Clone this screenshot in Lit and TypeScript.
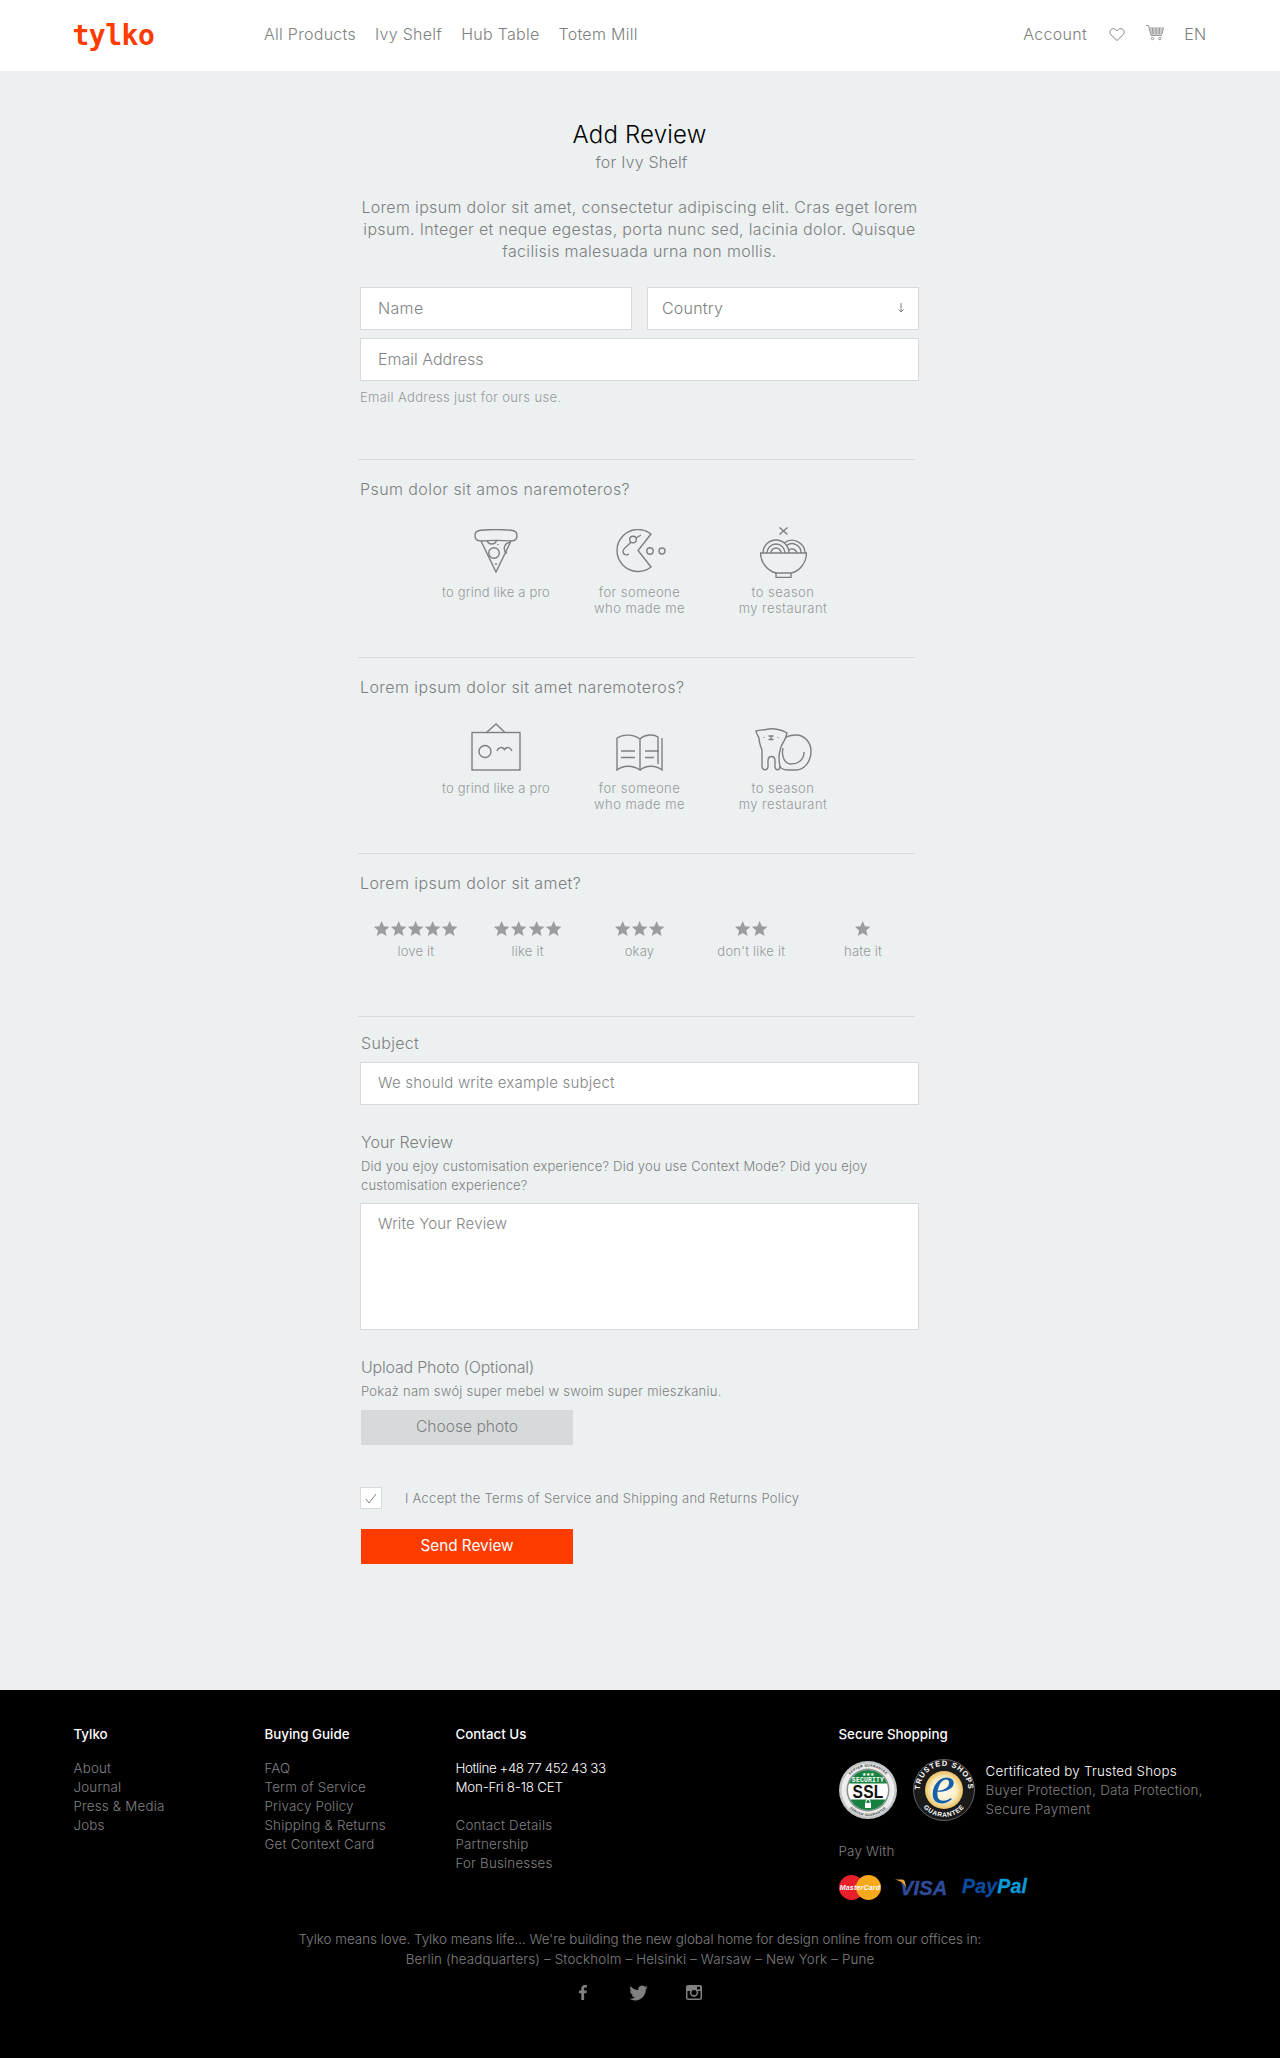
import { LitElement, html, css, svg } from "lit";
import { customElement } from "lit/decorators.js";

const pizza = svg`<svg class="ic mb7" width="44" height="44" viewBox="0 0 44 44"><path d="M7 12C3 12 1 10 1 6.500 1 3 3 1.500 7 1.200 16 .4 28 .4 37 1.200 41 1.500 43 3 43 6.500 43 10 41 12 37 12 27 11.200 17 11.200 7 12Z"/><path d="M7 12 22 43 37 12"/><path d="M13 11.500a5 5 0 0 0 9.500 0"/><circle cx="20" cy="24" r="5.300"/><path d="M36 13.500a6 6 0 0 0-3 11"/><path d="M24 15v1M22 34v2"/></svg>`;
const pacman = svg`<svg class="ic mb7" width="52" height="44" viewBox="0 0 52 44"><path d="M37 5A21 21 0 1 0 37 38L24 21.500Z"/><circle cx="36" cy="22" r="3.200"/><circle cx="48" cy="22" r="3"/><circle cx="19" cy="10.500" r="3.300"/><path d="M22 9l5-3M17 13c-3 4-8 6-8 9.500 0 3.500 4 4 6 2.500"/></svg>`;
const bowl = svg`<svg class="ic mb2" width="47" height="52" viewBox="0 0 47 52"><path d="M19.500 1.500l8 7M27.500 1.500l-8 7"/><path d="M.5 27h46c0 10-7 18-15 20H16C8 45 .5 37 .5 27Z"/><path d="M16 47v4.500h15V47"/><path d="M3 27a13 13 0 0 1 26 0M7 27a9 9 0 0 1 18 0M11 27a5 5 0 0 1 10 0"/><path d="M24 17a13 13 0 0 1 21 10M26 20a9 9 0 0 1 15 7M29 24a5 5 0 0 1 8 3"/></svg>`;
const frame = svg`<svg class="ic mb9" width="50" height="48" viewBox="0 0 50 48"><rect x="1" y="9.500" width="48" height="37.500"/><path d="M15.500 9.500 25 1l9 8.500"/><circle cx="14" cy="28.500" r="6"/><path d="M26 28c1-4 5.500-4.500 7.500-1.500 2-3 6-2.500 7.500 1.500"/></svg>`;
const book = svg`<svg class="ic mb9" width="47" height="38" viewBox="0 0 47 38"><path d="M1 37V5c6-4 16-4 23 1v31C17 32 7 32 1 37Z"/><path d="M24 6c5-5 14-5 18-2v27"/><path d="M24 37c6-5 16-5 22 0V5"/><path d="M5 18h14M5 24.500h14M29 18h14M29 24.500h9"/></svg>`;
const cat = svg`<svg class="ic mb9" width="57" height="43" viewBox="0 0 57 43"><path d="M7 22C5 17 4 13 4 10 3 8 1 5 1 3c4-1 7-1 10-1.500 4-1 8-1 12 0 3 .5 6 1.500 9 3.500-1 3-1 5-3 8-5 7-6 17-4 25"/><path d="M7 22v16c0 5 6 5 6 0v-5c0-6 7-6 7 0v5c0 5 5 5 5 0"/><path d="M30 10c3-2 7-3 11-3 9 0 15 8 15 16 0 11-7 19-15 19h-8c-5 0-8-2-8-4"/><path d="M28 20c-2 9 2 16 8 16 7 0 13-4 13-12"/><path d="M9 9v.8M23 9v.8M13.500 8h5M16 8v3.500M13.500 11.500h5"/></svg>`;
const heart = svg`<svg width="16" height="13" viewBox="0 0 16 13" fill="none" stroke="#808080" stroke-width="1"><path d="M8 12.500 1.700 6.500C-.5 3.500 2 .5 4.500.7 6 .8 7.300 1.700 8 3c.7-1.300 2-2.200 3.500-2.300C14 .5 16.500 3.500 14.300 6.500Z"/></svg>`;
const cart = svg`<svg width="18" height="16" viewBox="0 0 18 16" fill="none" stroke="#808080" stroke-width=".8"><path d="M0 .5h2.500L5 10.500h11"/><path d="M3 3h14.500l-1.500 6H5M6.500 3l.7 6M10 3l.2 6M13.500 3l-.5 6M3.500 5h13.500M4 7h12.800"/><circle cx="6.500" cy="13.500" r="1.200"/><circle cx="14" cy="13.500" r="1.200"/></svg>`;
const fb = svg`<svg width="8" height="15" viewBox="0 0 8 15" fill="#808080"><path d="M2.300 15V8.300H0V5.600h2.300V3.700C2.300 1.300 3.700 0 5.800 0c1 0 1.800.1 2.100.1v2.500H6.500c-1.200 0-1.400.5-1.400 1.300v1.700h2.700l-.4 2.700H5.100V15Z"/></svg>`;
const tw = svg`<svg width="19" height="16" viewBox="0 1.500 24 21" fill="#808080"><path d="M23.950 4.570a10 10 0 0 1-2.820.77 4.960 4.960 0 0 0 2.160-2.720c-.95.55-2 .96-3.120 1.190a4.920 4.920 0 0 0-8.380 4.480C7.690 8.100 4.070 6.130 1.640 3.160a4.820 4.820 0 0 0-.67 2.480c0 1.710.87 3.210 2.190 4.100a4.900 4.900 0 0 1-2.230-.62v.06a4.920 4.920 0 0 0 3.950 4.830 5 5 0 0 1-2.210.08 4.940 4.940 0 0 0 4.600 3.420A9.870 9.870 0 0 1 0 19.540a14 14 0 0 0 7.560 2.210c9.050 0 14-7.500 14-13.980 0-.21 0-.42-.02-.63a9.940 9.940 0 0 0 2.470-2.550z"/></svg>`;
const ig = svg`<svg width="16" height="15" viewBox="0 0 16 15"><rect width="16" height="15" rx="2" fill="#808080"/><rect x="1.500" y="6" width="13" height="7.500" fill="#000"/><circle cx="8" cy="7.500" r="4.200" fill="#808080"/><circle cx="8" cy="7.500" r="2.600" fill="#000"/><rect x="11" y="1.800" width="3" height="2.600" fill="#000"/></svg>`;
const ssl = svg`<svg width="58" height="58" viewBox="0 0 58 58">
<defs><path id="sslt" d="M5.500 29a23.500 23.500 0 0 1 47 0"/><path id="sslb" d="M3 29a26 26 0 0 0 52 0"/><clipPath id="sslc"><circle cx="29" cy="29" r="20"/></clipPath></defs>
<circle cx="29" cy="29" r="29" fill="#c4c6c8"/><circle cx="29" cy="29" r="26.500" fill="#eceded"/><circle cx="29" cy="29" r="21.500" fill="#8b8e91"/>
<text font-size="3.500" font-weight="700" fill="#333" font-family="Liberation Sans,sans-serif"><textPath href="#sslt" startOffset="50%" text-anchor="middle">SERVER GUARANTEE</textPath></text>
<text font-size="3.500" font-weight="700" fill="#333" font-family="Liberation Sans,sans-serif"><textPath href="#sslb" startOffset="50%" text-anchor="middle">SERVER GUARANTEE</textPath></text>
<g clip-path="url(#sslc)"><rect y="9" width="58" height="40" fill="#fff"/><rect y="9" width="58" height="13.500" fill="#17823f"/><rect y="38.500" width="58" height="11" fill="#17823f"/></g>
<text x="29" y="15" text-anchor="middle" font-size="5" fill="#fff" font-family="DejaVu Sans,sans-serif">★★★</text>
<text x="29" y="21" text-anchor="middle" font-size="6.400" font-weight="700" fill="#fff" font-family="Liberation Mono,monospace">SECURITY</text>
<text transform="translate(29 37) scale(.82 1)" text-anchor="middle" font-size="19" font-weight="700" fill="#111" font-family="Liberation Sans,sans-serif">SSL</text>
<rect x="26" y="42" width="6" height="5" fill="#fff"/><path d="M27 42v-1.500a2 2 0 0 1 4 0V42" fill="none" stroke="#fff"/>
</svg>`;
const trusted = svg`<svg width="62" height="62" viewBox="0 0 62 62">
<defs><path id="tst" d="M7.300 36A24.200 24.200 0 1 1 54.700 36"/><path id="tsb" d="M7 43A26.800 26.800 0 0 0 55 43"/><radialGradient id="tsg"><stop offset="0" stop-color="#fffdf4"/><stop offset=".65" stop-color="#fbeec4"/><stop offset="1" stop-color="#e9bf62"/></radialGradient></defs>
<circle cx="31" cy="31" r="30.500" fill="#1a1a1a" stroke="#777" stroke-width=".8"/><circle cx="31" cy="31" r="19" fill="url(#tsg)"/>
<text font-size="7.500" font-weight="700" fill="#fff" font-family="Liberation Sans,sans-serif" letter-spacing=".9"><textPath href="#tst" startOffset="50%" text-anchor="middle">TRUSTED SHOPS</textPath></text>
<text font-size="6.500" font-weight="700" fill="#fff" font-family="Liberation Sans,sans-serif" letter-spacing=".6"><textPath href="#tsb" startOffset="50%" text-anchor="middle">GUARANTEE</textPath></text>
<text x="30" y="44" text-anchor="middle" font-size="54" font-style="italic" font-family="Liberation Serif,serif" fill="#1560ab">e</text>
</svg>`;
const mc = svg`<svg width="42" height="25" viewBox="0 0 42 25"><circle cx="12.500" cy="12.500" r="12.500" fill="#e8202a"/><circle cx="29.500" cy="12.500" r="12.500" fill="#f8a81c"/><text x="21" y="15" text-anchor="middle" font-size="7" font-weight="700" font-style="italic" fill="#fff" font-family="Liberation Sans,sans-serif">MasterCard</text></svg>`;
const visa = svg`<svg width="53" height="20" viewBox="0 0 53 20"><text x="5" y="17" font-size="20" font-weight="700" font-style="italic" fill="#2f4b99" stroke="#2f4b99" stroke-width=".4" font-family="Liberation Sans,sans-serif">VISA</text><path d="M0 1.500h7c2 0 2.500 1 3 3l1.500 6.500C10 6 6 3 0 1.500Z" fill="#e9a134"/></svg>`;
const paypal = svg`<svg width="65" height="21" viewBox="0 0 65 21"><text y="16" font-size="19.500" font-weight="700" font-style="italic" font-family="Liberation Sans,sans-serif" stroke-width=".3"><tspan fill="#0b4c9e" stroke="#0b4c9e">Pay</tspan><tspan fill="#0a9bdc" stroke="#0a9bdc">Pal</tspan></text></svg>`;

const ratings: [number, string][] = [[5, "love it"], [4, "like it"], [3, "okay"], [2, "don't like it"], [1, "hate it"]];

@customElement("app-root")
export class AppRoot extends LitElement {
  static styles = css`
    :host { display: block; font-family: Inter, "Noto Sans", sans-serif; font-weight: 300; color: #7d7f80; letter-spacing: .33px; }
    * { box-sizing: border-box; }
    header { height: 71px; background: #fff; display: flex; align-items: center; padding: 0 73.5px 3px; font-size: 16px; }
    .logo { width: 190.5px; margin-left: -1px; margin-right: 1px; font-family: "DejaVu Sans Mono", monospace; font-weight: 700; font-size: 28px; letter-spacing: -.5px; color: #ff3c00; line-height: 30px; margin-top: 3px; }
    nav { display: flex; gap: 19px; flex: 1; letter-spacing: .28px; }
    .right { display: flex; align-items: center; }
    .right svg { display: block; }
    .right .h { margin: 0 21.500px 0 21.500px; }
    .right .c { margin: -2px 20px 0 0; }
    main { background: #ecf0f1; padding: 49px 0 126px; }
    .wrap { width: 559px; margin: 0 auto 0 360px; }
    h1 { margin: 0; font-size: 24px; line-height: 30px; font-weight: 300; color: #000; text-align: center; letter-spacing: .2px; }
    .sub { font-size: 16px; line-height: 22px; text-align: center; margin-top: 1px; padding-left: 4px; letter-spacing: .2px; }
    .intro { font-size: 16px; line-height: 22px; text-align: center; margin: 23px 0 25px; }
    .row { display: grid; grid-template-columns: 272px 272px; gap: 15px; margin-bottom: 8px; }
    input, textarea, .select { display: block; width: 100%; height: 43px; background: #fff; border: 1px solid #d6dadc; border-radius: 0; font: inherit; font-size: 16px; letter-spacing: .33px; color: #7d7f80; padding: 0 17px 2px; outline: none; }
    input.mail { letter-spacing: 0; }
    input.sm { font-size: 15px; letter-spacing: .22px; padding-bottom: 3px; }
    textarea { height: 127px; padding-top: 9px; resize: none; line-height: 22px; font-size: 15px; letter-spacing: .15px; }
    ::placeholder { color: #828586; opacity: 1; }
    .select { display: flex; align-items: center; justify-content: space-between; padding: 0 13px 2px 14px; letter-spacing: .2px; }
    .select svg { display: block; }
    .help { font-size: 13px; line-height: 16px; color: #96999a; margin-top: 8px; letter-spacing: .34px; }
    hr { border: 0; height: 1px; background: #d6dadc; width: 557px; margin: 0 0 0 -2px; }
    .sec1 { margin-top: 54px; }
    .q { font-size: 16px; line-height: 22px; margin: 0; letter-spacing: .42px; }
    .q.top { margin-top: 18px; }
    .icons { display: flex; justify-content: center; }
    .cell { width: 143.500px; text-align: center; font-size: 13px; line-height: 16px; color: #96999a; letter-spacing: .45px; }
    .cell:first-child { letter-spacing: .18px; }
    .box { display: flex; justify-content: center; align-items: flex-end; }
    .i1 { margin-top: 22px; margin-bottom: 41px; }
    .i1 .box { height: 62px; }
    .i2 { margin-top: 19px; margin-bottom: 41px; }
    .i2 .box { height: 63px; }
    .ic { display: block; fill: none; stroke: #7d7f80; stroke-width: 1.400; }
    .mb7 { margin-bottom: 11px; }
    .mb2 { margin-bottom: 6px; }
    .mb9 { margin-bottom: 9px; }
    .rates { display: grid; grid-template-columns: repeat(5, 1fr); margin: 24px 0 57px; text-align: center; }
    .stars { display: flex; justify-content: center; height: 20px; align-items: center; }
    .stars svg { display: block; margin: 0 -.1px; }
    .rlabel { font-size: 13px; line-height: 16px; color: #96999a; margin-top: 5px; letter-spacing: .2px; }
    .lab { font-size: 16px; line-height: 22px; margin: 0; padding-left: 1px; }
    .lab.s { margin-top: 15px; margin-bottom: 8px; }
    .lab.t { margin-top: 26px; letter-spacing: 0; }
    .lab.up { letter-spacing: -.22px; }
    .small { font-size: 13px; line-height: 19px; margin: 4px 0 8px; padding-left: 1px; letter-spacing: .22px; }
    .small.u { margin-bottom: 9px; letter-spacing: .25px; }
    .btn { width: 212px; height: 35px; margin-left: 1px; padding-bottom: 2px; display: flex; align-items: center; justify-content: center; font-size: 15.600px; letter-spacing: 0; }
    .grey { background: #d7dadb; color: #7d7f80; }
    .orange { background: #ff3c00; color: #fff; margin-top: 20px; font-weight: 400; font-size: 15.300px; }
    .check { display: flex; align-items: center; margin-top: 42px; font-size: 13px; line-height: 19px; letter-spacing: .27px; }
    .cb { width: 22px; height: 22px; background: #fff; border: 1px solid #d6dadc; display: flex; align-items: center; justify-content: center; margin-right: 23px; }
    footer { background: #000; height: 368px; padding: 35px 0 0 73.5px; font-size: 13.330px; line-height: 19px; color: #808080; letter-spacing: .2px; }
    .cols { display: grid; grid-template-columns: 191px 191px 383px 1fr; }
    h4 { margin: 0 0 15px; font-size: 13.330px; line-height: 19px; font-weight: 500; color: #fff; letter-spacing: 0; }
    .white { color: #fff; }
    .tel { letter-spacing: -.2px; }
    .hot { letter-spacing: -.4px; }
    .gap { height: 19px; }
    .sec { letter-spacing: .25px; }
    .badges { display: flex; align-items: center; height: 62px; margin-top: 3.500px; }
    .badges svg { display: block; flex: none; overflow: visible; }
    .badges .b2 { margin: 0 11px 0 16px; }
    .paywith { margin-top: 21px; }
    .cards { display: flex; align-items: center; margin-top: 14px; gap: 14px; }
    .cards svg { display: block; overflow: visible; }
    .tag { text-align: center; margin: 30px 0 0 -73.5px; letter-spacing: .02px; }
    .tag div + div { letter-spacing: .17px; margin-top: .5px; }
    .social { display: flex; justify-content: center; align-items: center; margin: 16px 0 0 -73.5px; }
    .social svg { display: block; }
    .social .f { margin-right: 42px; }
    .social .t { margin-right: 38px; }
  `;

  private star() {
    return svg`<svg width="17.300" height="17" viewBox="0 0 24 24" fill="#9a9d9e"><path d="M12 1.500l3.200 7.400 7.800.7-5.900 5.200 1.800 7.900-6.900-4.200-6.900 4.200 1.800-7.900L1 9.600l7.800-.7Z"/></svg>`;
  }

  private cell(icon: unknown, a: string, b?: string) {
    return html`<div class="cell"><div class="box">${icon}</div>${a}${b ? html`<br />${b}` : ""}</div>`;
  }

  render() {
    return html`
      <header>
        <div class="logo">tylko</div>
        <nav><span>All Products</span><span>Ivy Shelf</span><span>Hub Table</span><span>Totem Mill</span></nav>
        <div class="right"><span>Account</span><span class="h">${heart}</span><span class="c">${cart}</span><span>EN</span></div>
      </header>
      <main>
        <div class="wrap">
          <h1>Add Review</h1>
          <div class="sub">for Ivy Shelf</div>
          <div class="intro">Lorem ipsum dolor sit amet, consectetur adipiscing elit. Cras eget lorem ipsum. Integer et neque egestas, porta nunc sed, lacinia dolor. Quisque facilisis malesuada urna non mollis.</div>
          <div class="row">
            <input placeholder="Name" />
            <div class="select"><span>Country</span><svg width="8" height="10" viewBox="0 0 8 10" fill="none" stroke="#808080"><path d="M4 0v9M1.500 6.500 4 9l2.500-2.500"/></svg></div>
          </div>
          <input class="mail" placeholder="Email Address" />
          <div class="help">Email Address just for ours use.</div>
          <hr class="sec1" />
          <p class="q top">Psum dolor sit amos naremoteros?</p>
          <div class="icons i1">
            ${this.cell(pizza, "to grind like a pro")}
            ${this.cell(pacman, "for someone", "who made me")}
            ${this.cell(bowl, "to season", "my restaurant")}
          </div>
          <hr />
          <p class="q top">Lorem ipsum dolor sit amet naremoteros?</p>
          <div class="icons i2">
            ${this.cell(frame, "to grind like a pro")}
            ${this.cell(book, "for someone", "who made me")}
            ${this.cell(cat, "to season", "my restaurant")}
          </div>
          <hr />
          <p class="q top">Lorem ipsum dolor sit amet?</p>
          <div class="rates">
            ${ratings.map(([n, l]) => html`<div><div class="stars">${Array.from({ length: n }, () => this.star())}</div><div class="rlabel">${l}</div></div>`)}
          </div>
          <hr />
          <p class="lab s">Subject</p>
          <input class="sm" placeholder="We should write example subject" />
          <p class="lab t">Your Review</p>
          <div class="small">Did you ejoy customisation experience? Did you use Context Mode? Did you ejoy customisation experience?</div>
          <textarea placeholder="Write Your Review"></textarea>
          <p class="lab t up">Upload Photo (Optional)</p>
          <div class="small u">Pokaż nam swój super mebel w swoim super mieszkaniu.</div>
          <div class="btn grey">Choose photo</div>
          <div class="check"><span class="cb"><svg width="12" height="11" viewBox="0 0 12 11" fill="none" stroke="#808080"><path d="M1 6l3 4 7-9"/></svg></span>I Accept the Terms of Service and Shipping and Returns Policy</div>
          <div class="btn orange">Send Review</div>
        </div>
      </main>
      <footer>
        <div class="cols">
          <div><h4>Tylko</h4>About<br />Journal<br />Press &amp; Media<br />Jobs</div>
          <div><h4>Buying Guide</h4>FAQ<br />Term of Service<br />Privacy Policy<br />Shipping &amp; Returns<br />Get Context Card</div>
          <div><h4>Contact Us</h4><span class="white tel"><span class="hot">Hotline +48 77 452 43 33</span><br />Mon-Fri 8-18 CET</span><div class="gap"></div>Contact Details<br />Partnership<br />For Businesses</div>
          <div>
            <h4>Secure Shopping</h4>
            <div class="badges">${ssl}<span class="b2">${trusted}</span><div class="sec"><span class="white">Certificated by Trusted Shops</span><br />Buyer Protection, Data Protection,<br />Secure Payment</div></div>
            <div class="paywith">Pay With</div>
            <div class="cards">${mc}${visa}${paypal}</div>
          </div>
        </div>
        <div class="tag"><div>Tylko means love. Tylko means life... We're building the new global home for design online from our offices in:</div><div>Berlin (headquarters) – Stockholm – Helsinki – Warsaw – New York – Pune</div></div>
        <div class="social"><span class="f">${fb}</span><span class="t">${tw}</span><span>${ig}</span></div>
      </footer>
    `;
  }
}
